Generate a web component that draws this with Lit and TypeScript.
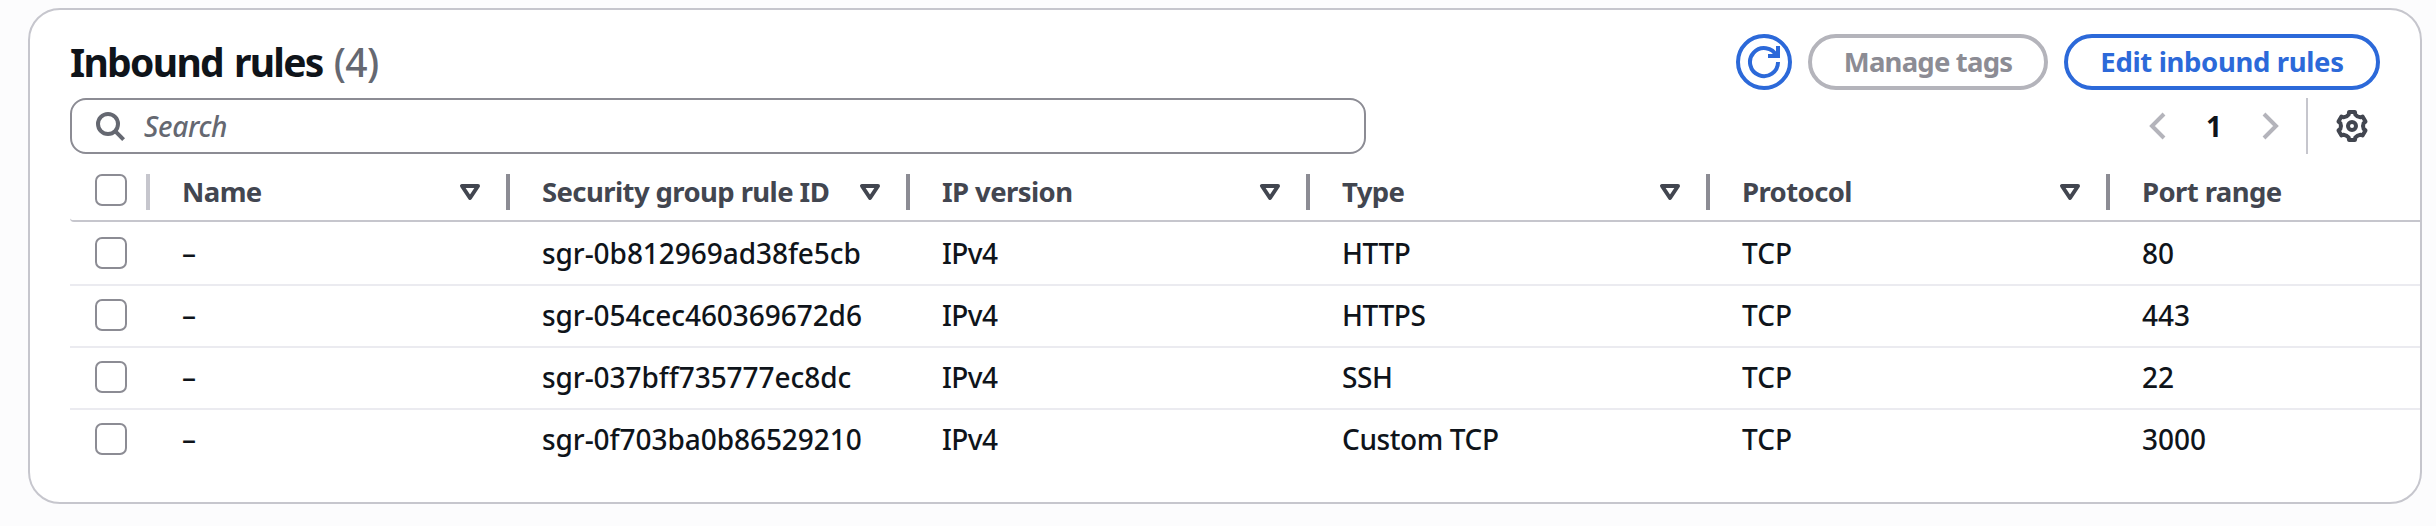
import { LitElement, html, css, svg } from "lit";
import { customElement, property } from "lit/decorators.js";

type Rule = { name: string; id: string; ip: string; type: string; protocol: string; port: string };

const RULES: Rule[] = [
  { name: "–", id: "sgr-0b812969ad38fe5cb", ip: "IPv4", type: "HTTP", protocol: "TCP", port: "80" },
  { name: "–", id: "sgr-054cec460369672d6", ip: "IPv4", type: "HTTPS", protocol: "TCP", port: "443" },
  { name: "–", id: "sgr-037bff735777ec8dc", ip: "IPv4", type: "SSH", protocol: "TCP", port: "22" },
  { name: "–", id: "sgr-0f703ba0b86529210", ip: "IPv4", type: "Custom TCP", protocol: "TCP", port: "3000" },
];

const COLUMNS = ["Name", "Security group rule ID", "IP version", "Type", "Protocol", "Port range"];

// Outline of a six-toothed gear centred on (8, 8).
function gearPath(): string {
  const at = (deg: number, r: number) => {
    const a = ((deg - 90) * Math.PI) / 180;
    return `${(8 + r * Math.cos(a)).toFixed(2)} ${(8 + r * Math.sin(a)).toFixed(2)}`;
  };
  let d = `M${at(-12, 7.1)}`;
  for (let i = 0; i < 6; i++) {
    const c = i * 60;
    d += `L${at(c + 12, 7.1)}L${at(c + 16, 6)}Q${at(c + 30, 5.2)} ${at(c + 44, 6)}L${at(c + 48, 7.1)}`;
  }
  return d + "Z";
}

const ICONS = {
  refresh: svg`<path d="M10 5h5V0"/><path d="M15 8a7 7 0 1 1-.7-3"/>`,
  search: svg`<circle cx="7" cy="7" r="5"/><path d="m10.6 10.6 4.2 4.2"/>`,
  prev: svg`<path d="M11 2 5 8l6 6"/>`,
  next: svg`<path d="m5 2 6 6-6 6"/>`,
  sort: svg`<path stroke-linejoin="round" d="M4 5h8l-4 6z"/>`,
  gear: svg`<path stroke-linejoin="round" d=${gearPath()}/><circle cx="8" cy="8" r="2"/>`,
};

@customElement("ui-icon")
export class UiIcon extends LitElement {
  @property() name: keyof typeof ICONS = "search";

  static styles = css`
    :host { display: block; width: 32px; height: 32px; flex: none; }
    .glyph { display: block; width: 100%; height: 100%; fill: none; stroke: currentColor; stroke-width: 2; overflow: visible; }
  `;

  render() {
    return html`<svg class="glyph" viewBox="0 0 16 16" aria-hidden="true">${ICONS[this.name]}</svg>`;
  }
}

@customElement("app-root")
export class AppRoot extends LitElement {
  static styles = css`
    :host {
      display: block;
      box-sizing: border-box;
      height: 526px;
      padding: 8px 14px 22px 28px;
      overflow: hidden;
      background: #fcfcfd;
      color: #0f141a;
      font: 500 28px/40px "Noto Sans", "Open Sans", sans-serif;
      white-space: nowrap;
    }
    * { box-sizing: border-box; }
    .card { height: 496px; border: 2px solid #c6c6cd; border-radius: 32px; background: #fff; overflow: hidden; padding: 24px 0 0 40px; }
    .header { display: flex; align-items: center; justify-content: space-between; height: 56px; padding-right: 40px; }
    .title { margin: 0; font-size: 39px; line-height: 56px; font-weight: 700; letter-spacing: -1.7px; word-spacing: 2.5px; }
    .count { color: #656871; font-weight: 500; letter-spacing: -0.5px; }
    .actions { display: flex; gap: 16px; }
    .btn {
      display: flex; align-items: center; justify-content: center; height: 56px; padding: 0;
      border: 4px solid #2c69d9; border-radius: 28px; background: #fff; color: #2c69d9;
      font: inherit; font-size: 27.5px; font-weight: 700;
    }
    .btn-icon { width: 56px; }
    .btn-tags { width: 240px; border-color: #b4b4bb; color: #8c8c94; letter-spacing: -0.8px; }
    .btn-edit { width: 316px; letter-spacing: -0.35px; }
    .tools { display: flex; align-items: center; justify-content: space-between; height: 56px; margin-top: 8px; padding-right: 40px; }
    .search { display: flex; align-items: center; gap: 18px; width: 1296px; height: 56px; padding-left: 22px; border: 2px solid #8c8c94; border-radius: 16px; color: #656871; font-style: italic; letter-spacing: -0.3px; }
    .pager { display: flex; align-items: center; height: 56px; color: #b4b4bb; }
    .page { width: 80px; text-align: center; font-weight: 700; color: #0f141a; }
    .prefs { display: flex; align-items: center; height: 56px; margin-left: 20px; padding: 0 12px 0 28px; border-left: 2px solid #c6c6cd; color: #424650; }
    .row { display: grid; grid-template-columns: 80px 360px repeat(4, 400px) 1fr; align-items: center; height: 62px; padding-bottom: 2px; border-bottom: 2px solid #ebebf0; }
    .row:nth-child(2) { height: 64px; padding-top: 2px; }
    .row:last-child { border-bottom-color: transparent; }
    .head { height: 68px; padding: 10px 0 0; border-bottom-color: #c6c6cd; border-bottom-left-radius: 4px; color: #424650; font-size: 27.5px; font-weight: 700; letter-spacing: -0.6px; }
    .cell { padding-left: 32px; }
    .id { letter-spacing: -0.05px; }
    .ip { letter-spacing: -0.6px; }
    .type { letter-spacing: -0.4px; }
    .head .cell { display: flex; align-items: center; justify-content: space-between; height: 36px; padding-right: 20px; border-right: 4px solid #8c8c94; }
    .head .cell:last-child { border-right: 0; }
    .label { padding-bottom: 1px; }
    .pick { padding-left: 25px; }
    .head .pick { display: flex; align-items: flex-start; height: 36px; border-right: 4px solid #c6c6cd; }
    .box { display: block; width: 32px; height: 32px; border: 2px solid #8c8c94; border-radius: 7px; background: #fff; }
  `;

  render() {
    return html`
      <section class="card">
        <header class="header">
          <h2 class="title">Inbound rules <span class="count">(4)</span></h2>
          <div class="actions">
            <button class="btn btn-icon" aria-label="Refresh"><ui-icon name="refresh"></ui-icon></button>
            <button class="btn btn-tags">Manage tags</button>
            <button class="btn btn-edit">Edit inbound rules</button>
          </div>
        </header>
        <div class="tools">
          <div class="search"><ui-icon name="search"></ui-icon><span>Search</span></div>
          <div class="pager">
            <ui-icon name="prev"></ui-icon>
            <span class="page">1</span>
            <ui-icon name="next"></ui-icon>
            <div class="prefs"><ui-icon name="gear"></ui-icon></div>
          </div>
        </div>
        <div class="table">
          <div class="row head">
            <div class="pick"><span class="box"></span></div>
            ${COLUMNS.map(
              (label, i) => html`<div class="cell"><span class="label">${label}</span>${i < COLUMNS.length - 1 ? html`<ui-icon name="sort"></ui-icon>` : ""}</div>`
            )}
          </div>
          ${RULES.map(
            (r) => html`
              <div class="row">
                <div class="pick"><span class="box"></span></div>
                <div class="cell">${r.name}</div>
                <div class="cell id">${r.id}</div>
                <div class="cell ip">${r.ip}</div>
                <div class="cell type">${r.type}</div>
                <div class="cell">${r.protocol}</div>
                <div class="cell">${r.port}</div>
              </div>
            `
          )}
        </div>
      </section>
    `;
  }
}
